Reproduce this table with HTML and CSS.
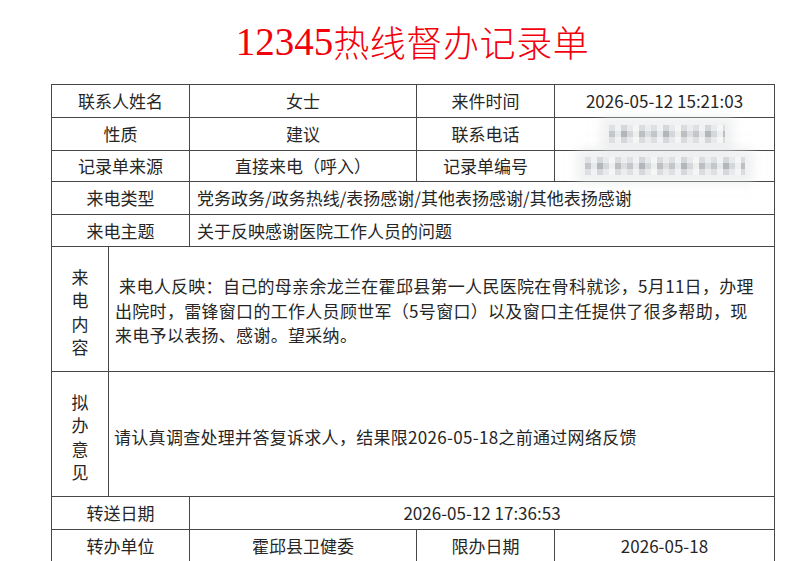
FILE: index.html
```html
<!DOCTYPE html>
<html lang="zh-CN">
<head>
<meta charset="utf-8">
<title>12345热线督办记录单</title>
<link rel="stylesheet" href="styles.css">
</head>
<body>
<div class="page">
  <h1 class="title"><span class="num">12345</span>热线督办记录单</h1>
  <table class="sheet">
    <colgroup>
      <col class="c1"><col class="c2"><col class="c3"><col class="c4"><col class="c5">
    </colgroup>
    <tr class="r">
      <td colspan="2">联系人姓名</td>
      <td>女士</td>
      <td>来件时间</td>
      <td>2026-05-12 15:21:03</td>
    </tr>
    <tr class="r">
      <td colspan="2">性质</td>
      <td>建议</td>
      <td>联系电话</td>
      <td><div class="mask mask-phone"></div></td>
    </tr>
    <tr class="r r-short">
      <td colspan="2">记录单来源</td>
      <td>直接来电（呼入）</td>
      <td>记录单编号</td>
      <td><div class="mask mask-no"></div></td>
    </tr>
    <tr class="r">
      <td colspan="2">来电类型</td>
      <td colspan="3" class="left">党务政务/政务热线/表扬感谢/其他表扬感谢/其他表扬感谢</td>
    </tr>
    <tr class="r r-mid">
      <td colspan="2">来电主题</td>
      <td colspan="3" class="left">关于反映感谢医院工作人员的问题</td>
    </tr>
    <tr class="tall">
      <td class="vlabel"><div class="vstack"><span>来</span><span>电</span><span>内</span><span>容</span></div></td>
      <td colspan="4" class="text"><div class="ctext"> 来电人反映：自己的母亲余龙兰在霍邱县第一人民医院在骨科就诊，5月11日，办理<br>出院时，雷锋窗口的工作人员顾世军（5号窗口）以及窗口主任提供了很多帮助，现<br>来电予以表扬、感谢。望采纳。</div></td>
    </tr>
    <tr class="tall">
      <td class="vlabel"><div class="vstack"><span>拟</span><span>办</span><span>意</span><span>见</span></div></td>
      <td colspan="4" class="text op"><div class="optext">请认真调查处理并答复诉求人，结果限2026-05-18之前通过网络反馈</div></td>
    </tr>
    <tr class="r">
      <td colspan="2">转送日期</td>
      <td colspan="3">2026-05-12 17:36:53</td>
    </tr>
    <tr class="r">
      <td colspan="2">转办单位</td>
      <td>霍邱县卫健委</td>
      <td>限办日期</td>
      <td>2026-05-18</td>
    </tr>
  </table>
</div>
</body>
</html>
```
FILE: styles.css
```css
html, body {
  margin: 0;
  padding: 0;
  background: #ffffff;
}
.page {
  padding-left: 51px;
  width: 723px;
}
.title {
  margin: 0;
  height: 84px;
  display: flex;
  align-items: center;
  justify-content: center;
  padding-left: 0;
  padding-bottom: 2px;
  box-sizing: border-box;
  font-family: "Noto Sans CJK SC", sans-serif;
  font-weight: 300;
  font-size: 36px;
  color: #f2000c;
  letter-spacing: 0.6px;
}
.title .num {
  font-family: "Liberation Serif", serif;
  font-size: 39px;
  letter-spacing: 0;
}
.sheet {
  border-collapse: collapse;
  table-layout: fixed;
  width: 723px;
  font-family: "Noto Sans CJK SC", sans-serif;
  font-size: 17px;
  color: #262626;
}
.c1 { width: 57px; }
.c2 { width: 81px; }
.c3 { width: 227px; }
.c4 { width: 138px; }
.c5 { width: 220px; }
.sheet td {
  border: 1px solid #474747;
  padding: 0;
  text-align: center;
  vertical-align: middle;
  line-height: 22px;
  white-space: nowrap;
}
.r td { height: 32px; }
.r-short td { height: 30px; }
.r-mid td { height: 31px; }
.sheet td.left {
  text-align: left;
  padding-left: 7px;
}
.tall td { height: 124px; }
.sheet td.vlabel {
  line-height: 23.5px;
}
.vstack {
  padding-top: 5px;
}
.vstack span {
  display: block;
}
.sheet td.text {
  text-align: left;
  padding-left: 6px;
  line-height: 24.5px;
  letter-spacing: 0.3px;
  white-space: pre;
}
.ctext {
  padding-top: 4px;
}
.sheet td.op {
  padding-left: 5px;
}
.optext {
  padding-top: 6px;
}
.mask {
  margin: 0 auto;
  filter: blur(0.6px);
  box-shadow: 0 0 10px 8px rgba(225, 228, 230, 0.55);
  background-color: #dfe1e3;
  background-image:
    repeating-linear-gradient(0deg, rgba(255,255,255,0.45) 0 6px, rgba(255,255,255,0) 6px 12px),
    repeating-linear-gradient(90deg, #c3c6ca 0 6px, #e6e8e9 6px 12px, #b3b7bb 12px 18px, #d5d8db 18px 24px, #eeefef 24px 30px, #bcc0c3 30px 36px, #dcdee0 36px 42px);
}
.mask-phone {
  width: 116px;
  height: 18px;
  margin-left: 54px;
}
.mask-no {
  width: 160px;
  height: 18px;
  margin-left: 30px;
}
```
